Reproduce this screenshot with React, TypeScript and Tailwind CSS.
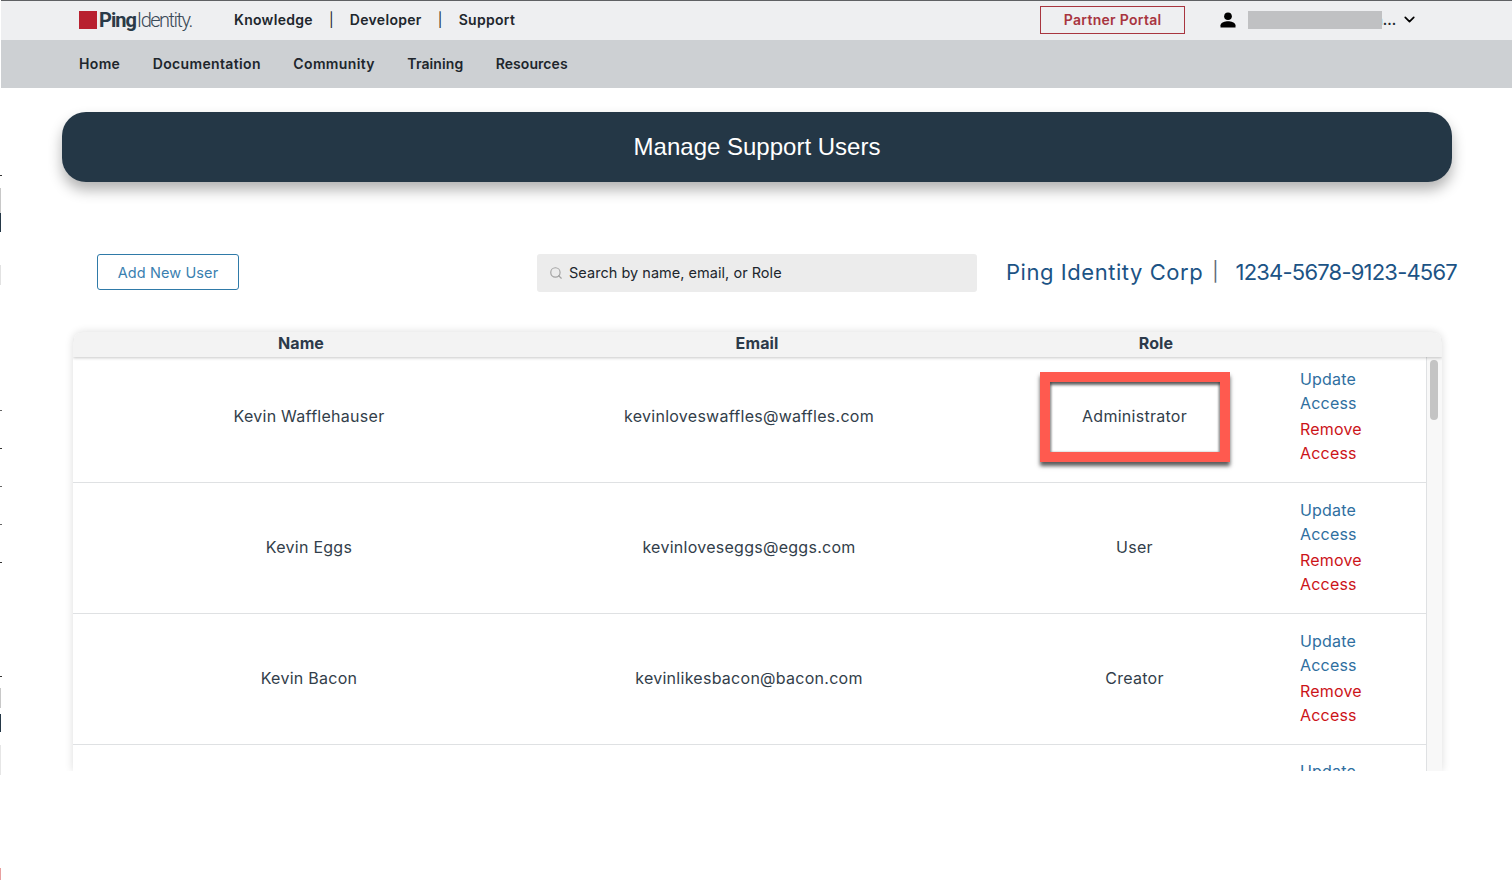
import { Search, ChevronDown } from "lucide-react";

const users = [
  { name: "Kevin Wafflehauser", email: "kevinloveswaffles@waffles.com", role: "Administrator" },
  { name: "Kevin Eggs", email: "kevinloveseggs@eggs.com", role: "User" },
  { name: "Kevin Bacon", email: "kevinlikesbacon@bacon.com", role: "Creator" },
];

function Actions() {
  return (
    <div className="ml-[70px] flex flex-col text-[16px] leading-[24px] tracking-[0.2px]">
      <a className="text-[#2f6f9f]">Update</a>
      <a className="text-[#2f6f9f]">Access</a>
      <a className="mt-[2px] text-[#cc1419]">Remove</a>
      <a className="text-[#cc1419]">Access</a>
    </div>
  );
}

function Row({ u, first }: { u: (typeof users)[number]; first?: boolean }) {
  const boxed = u.role === "Administrator";
  return (
    <div className={`flex h-[131px] items-center border-b border-[#dfe1e3] pb-[2px] text-[16px] tracking-[0.27px] text-[#323e4a] ${first ? "-mt-[5px]" : ""}`}>
      <div className="w-[472px] text-center">{u.name}</div>
      <div className="w-[408px] text-center">{u.email}</div>
      <div className="ml-[86px] flex w-[191px] items-center justify-center">
        {boxed ? (
          <div className="mt-[2px] flex h-[90px] w-[190px] items-center justify-center border-[10px] border-[#ff5a4f] pb-[2px] shadow-[0_4px_4px_rgba(0,0,0,0.65),inset_0_3px_3px_rgba(0,0,0,0.6),inset_2px_0_2px_rgba(0,0,0,0.2),inset_-2px_0_2px_rgba(0,0,0,0.2)]">
            {u.role}
          </div>
        ) : (
          u.role
        )}
      </div>
      <Actions />
    </div>
  );
}

function EdgeMarks() {
  return (
    <div className="absolute left-0 top-0 h-[890px] w-[2px]">
      <div className="absolute top-[175px] h-px w-[2px] bg-[#333333]" />
      <div className="absolute top-[188px] h-[25px] w-px bg-[#c8c8c8]" />
      <div className="absolute top-[213px] h-[19px] w-px bg-[#243746]" />
      <div className="absolute top-[265px] h-[20px] w-px bg-[#e2e2e2]" />
      <div className="absolute top-[410px] h-px w-[2px] bg-[#666666]" />
      <div className="absolute top-[448px] h-px w-[2px] bg-[#333333]" />
      <div className="absolute top-[486px] h-px w-[2px] bg-[#666666]" />
      <div className="absolute top-[524px] h-px w-[2px] bg-[#666666]" />
      <div className="absolute top-[562px] h-px w-[2px] bg-[#333333]" />
      <div className="absolute top-[676px] h-px w-[2px] bg-[#333333]" />
      <div className="absolute top-[688px] h-[20px] w-px bg-[#c8c8c8]" />
      <div className="absolute top-[714px] h-[18px] w-px bg-[#243746]" />
      <div className="absolute top-[745px] h-[30px] w-px bg-[#e6e6e6]" />
      <div className="absolute top-[868px] h-[12px] w-px bg-[#e8a0a0]" />
    </div>
  );
}

export default function App() {
  return (
    <div className="relative h-[890px] w-[1512px] overflow-hidden bg-white font-['Inter',sans-serif]">
      <EdgeMarks />
      <header className="ml-px flex h-[40px] items-center border-t border-[#5f6164] bg-[#eeeff1] pb-[2px] pl-[78px] text-[14px] font-semibold tracking-[0.3px] text-[#20262c]">
        <div className="flex w-[115px] items-center tracking-normal">
          <span className="block h-[18px] w-[18px] bg-[#b8202f]" />
          <span className="ml-[2px] font-['Roboto',sans-serif] text-[20px] font-bold tracking-[-1px] text-[#2a3a48]">Ping</span>
          <span className="ml-[1px] font-['Roboto',sans-serif] text-[20px] font-light tracking-[-1.5px] text-[#3b4a57]">Identity.</span>
        </div>
        <nav className="ml-[40px] flex items-center">
          <span>Knowledge</span>
          <span className="mx-[16px] font-normal">|</span>
          <span>Developer</span>
          <span className="mx-[16px] font-normal">|</span>
          <span>Support</span>
        </nav>
        <div className="ml-[525px] flex h-[28px] w-[145px] items-center justify-center border border-[#a8353f] text-[#a8353f]">
          Partner Portal
        </div>
        <svg viewBox="0 0 24 24" className="ml-[33px] h-[20px] w-[20px] fill-black">
          <circle cx="12" cy="7.5" r="4.6" />
          <path d="M3 21v-2.6c0-3.2 5.6-4.9 9-4.9s9 1.7 9 4.9V21z" />
        </svg>
        <div className="relative ml-[10px] flex w-[148px] justify-end text-[14px] tracking-normal text-[#20262c]">
          <span>n...</span>
          <div className="absolute left-0 top-[2px] h-[18px] w-[134px] bg-[#c0c1c3]" />
        </div>
        <ChevronDown className="ml-[5px] h-[17px] w-[17px] text-black" strokeWidth={2.4} />
      </header>

      <div className="ml-px flex h-[48px] items-center gap-[32.5px] bg-[#cdd0d3] pb-[2px] pl-[78px] text-[14px] font-semibold tracking-[0.35px] text-[#20262c]">
        <span>Home</span>
        <span>Documentation</span>
        <span>Community</span>
        <span className="tracking-[0.1px]">Training</span>
        <span className="tracking-[0.05px]">Resources</span>
      </div>

      <div className="ml-[62px] mt-[24px] flex h-[70px] w-[1390px] items-center justify-center rounded-[24px] bg-[#243746] font-['Liberation_Sans',sans-serif] text-[24px] text-white shadow-[0_8px_14px_rgba(0,0,0,0.3)]">
        Manage Support Users
      </div>

      <div className="mt-[72px] flex h-[38px] items-start whitespace-nowrap">
        <button className="ml-[97px] h-[36px] w-[142px] rounded-[3px] border border-[#2f7aa8] pt-px text-[14.5px] tracking-[0.1px] text-[#3a80b0]">
          Add New User
        </button>
        <div className="ml-[298px] flex h-[38px] w-[440px] items-center rounded-[3px] bg-[#ececec] pl-[12px] text-[14.5px] tracking-[0.03px] text-[#20262c]">
          <Search className="h-[14px] w-[14px] text-[#a3a3a3]" strokeWidth={2} />
          <span className="ml-[6px]">Search by name, email, or Role</span>
        </div>
        <div className="ml-[29px] mt-[2px] flex items-center text-[22px] text-[#1c5385]">
          <span className="tracking-[0.55px]">Ping Identity Corp</span>
          <span className="ml-[9px] text-[19px] text-[#5b6b78]">|</span>
          <span className="ml-[17px] tracking-[-0.8px]">1234-5678-9123-4567</span>
        </div>
      </div>

      <section className="ml-[73px] mt-[40px] h-[439px] w-[1369px] overflow-hidden rounded-t-[10px] shadow-[0_0_8px_rgba(0,0,0,0.14)] [clip-path:inset(-10px_-10px_0_-10px)]">
        <div className="relative z-10 grid h-[25px] grid-cols-[456px_456px_342px] items-center bg-[#f3f3f3] pb-[3px] text-[16px] font-bold leading-[22px] tracking-[0.1px] text-[#2c3a4a] shadow-[0_1px_3px_rgba(0,0,0,0.22)]">
          <span className="text-center">Name</span>
          <span className="text-center">Email</span>
          <span className="text-center">Role</span>
        </div>
        <div className="flex">
          <div className="w-[1354px] border-r border-[#dfe1e3]">
            {users.map((u, i) => (
              <Row key={u.name} u={u} first={i === 0} />
            ))}
            <div className="flex items-start pt-[14px] text-[16px] leading-[24px] tracking-[0.2px] text-[#2f6f9f]">
              <span className="ml-[1227px]">Update</span>
            </div>
          </div>
          <div className="h-[414px] w-[15px] bg-[#f8f8f8] pl-[3px] pt-[3px]">
            <div className="h-[60px] w-[8px] rounded-full bg-[#c4c4c4]" />
          </div>
        </div>
      </section>
    </div>
  );
}
